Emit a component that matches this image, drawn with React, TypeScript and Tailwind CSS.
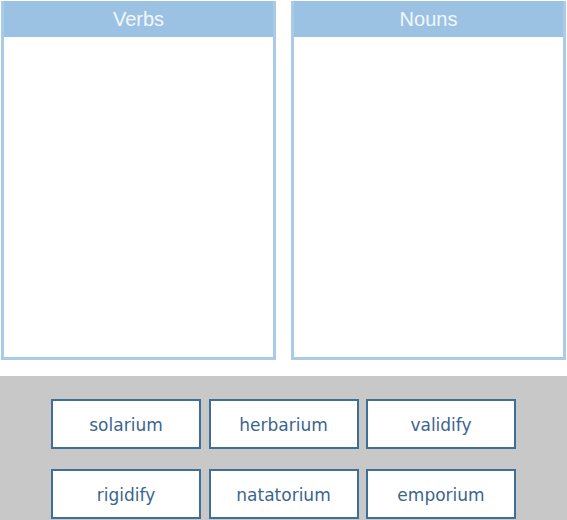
const buckets = ["Verbs", "Nouns"];
const words = ["solarium", "herbarium", "validify", "rigidify", "natatorium", "emporium"];

function Bucket({ title }: { title: string }) {
  return (
    <div className="flex h-[359px] w-[275px] flex-col border-[3px] border-t-0 border-[#a9cbe7] bg-white">
      <div className="flex h-[36px] items-center justify-center bg-[#9cc2e3] font-['Liberation_Sans',Arial,sans-serif] text-[20px] text-[#f2f7fc]">
        {title}
      </div>
      <div className="flex-1" />
    </div>
  );
}

export default function App() {
  return (
    <div className="flex h-[520px] w-[567px] flex-col bg-white">
      <div className="flex gap-[15px] pl-[1px] pt-[1px]">
        {buckets.map((b) => (
          <Bucket key={b} title={b} />
        ))}
      </div>
      <div className="mt-[16px] flex flex-1 justify-center bg-[#c8c8c8] pt-[23px]">
        <div className="grid h-fit grid-cols-[150px_150px_150px] gap-x-[7.5px] gap-y-[20px]">
          {words.map((w) => (
            <div
              key={w}
              className="flex h-[50px] items-center justify-center border-2 border-[#3e6f99] bg-white pt-[3px] font-['DejaVu_Sans',Verdana,sans-serif] text-[17px] text-[#3a6590]"
            >
              {w}
            </div>
          ))}
        </div>
      </div>
    </div>
  );
}
